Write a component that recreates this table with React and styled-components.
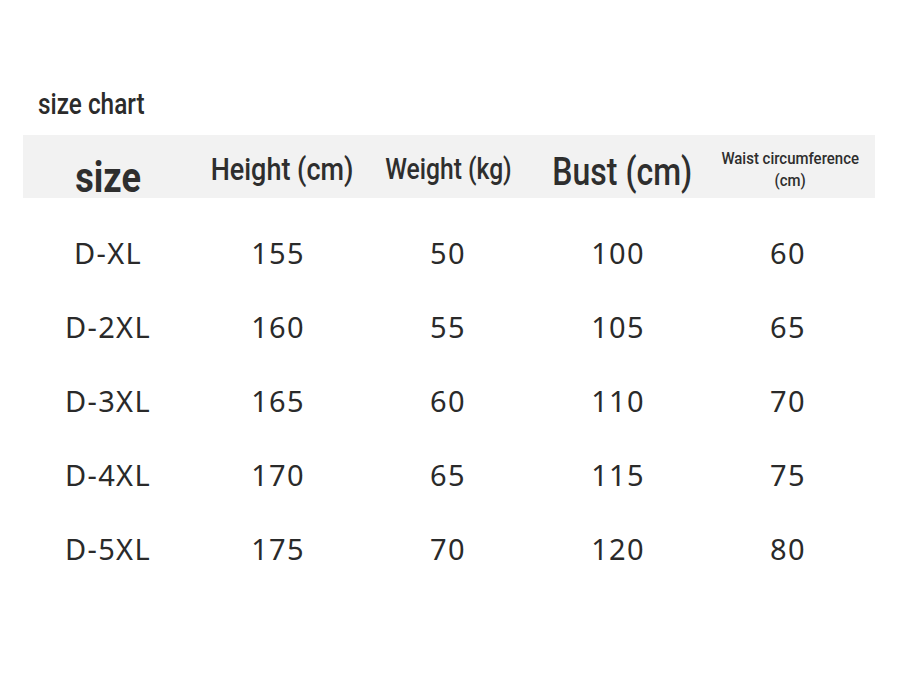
import React from 'react';
import styled, { createGlobalStyle } from 'styled-components';

const GlobalStyle = createGlobalStyle`
  html, body {
    margin: 0;
    padding: 0;
    background: #ffffff;
  }
`;

const Page = styled.div`
  width: 898px;
  height: 674px;
  padding: 84px 23px 0 23px;
  box-sizing: border-box;
  background: #fff;
`;

const Title = styled.div`
  padding-left: 15px;
  height: 51px;
  font-family: Roboto, "Liberation Sans", sans-serif;
  font-weight: 500;
  font-size: 29px;
  color: #2b2b2b;
  line-height: 40px;
`;

// narrow the Roboto glyphs to look like the condensed face
const Narrow = styled.span`
  display: inline-block;
  transform: scaleX(${p => p.$sx || 0.8});
  transform-origin: ${p => p.$origin || 'center'};
  white-space: nowrap;
`;

const HeaderBand = styled.div`
  display: grid;
  grid-template-columns: repeat(5, 170px);
  height: 63px;
  background: #f2f2f2;
  width: 852px;
`;

const HeadCell = styled.div`
  display: flex;
  align-items: center;
  justify-content: center;
  text-align: center;
  font-family: Roboto, "Liberation Sans", sans-serif;
  font-weight: ${p => p.$weight || 500};
  font-size: ${p => p.$size}px;
  line-height: ${p => p.$lh || 1.2};
  color: #2e2e2e;
  padding-top: ${p => p.$pt || 0}px;
  padding-left: ${p => p.$pl || 0}px;
`;

const Body = styled.div`
  padding-top: 17px;
`;

const Row = styled.div`
  display: grid;
  grid-template-columns: repeat(5, 170px);
  height: 74px;
  align-items: center;
`;

const Cell = styled.div`
  text-align: center;
  font-family: "Noto Sans", "Open Sans", sans-serif;
  font-size: 29px;
  letter-spacing: 1.3px;
  color: #2a2a2a;
`;

const rows = [
  ['D-XL', 155, 50, 100, 60],
  ['D-2XL', 160, 55, 105, 65],
  ['D-3XL', 165, 60, 110, 70],
  ['D-4XL', 170, 65, 115, 75],
  ['D-5XL', 175, 70, 120, 80],
];

export default function App() {
  return (
    <Page>
      <GlobalStyle />
      <Title>
        <Narrow $sx={0.84} $origin="left">size chart</Narrow>
      </Title>
      <HeaderBand>
        <HeadCell $size={43} $weight={700} $pt={17}>
          <Narrow $sx={0.84}>size</Narrow>
        </HeadCell>
        <HeadCell $size={31} $pt={1} $pl={8}>
          <Narrow $sx={0.87}>Height (cm)</Narrow>
        </HeadCell>
        <HeadCell $size={29} $pt={1}>
          <Narrow $sx={0.85}>Weight (kg)</Narrow>
        </HeadCell>
        <HeadCell $size={39} $pt={6} $pl={8}>
          <Narrow $sx={0.82}>Bust (cm)</Narrow>
        </HeadCell>
        <HeadCell $size={17} $lh={1.3} $pt={0} $pl={4}>
          <Narrow $sx={0.88}>
            Waist circumference
            <br />
            (cm)
          </Narrow>
        </HeadCell>
      </HeaderBand>
      <Body>
        {rows.map(r => (
          <Row key={r[0]}>
            {r.map((v, i) => (
              <Cell key={i}>{v}</Cell>
            ))}
          </Row>
        ))}
      </Body>
    </Page>
  );
}
